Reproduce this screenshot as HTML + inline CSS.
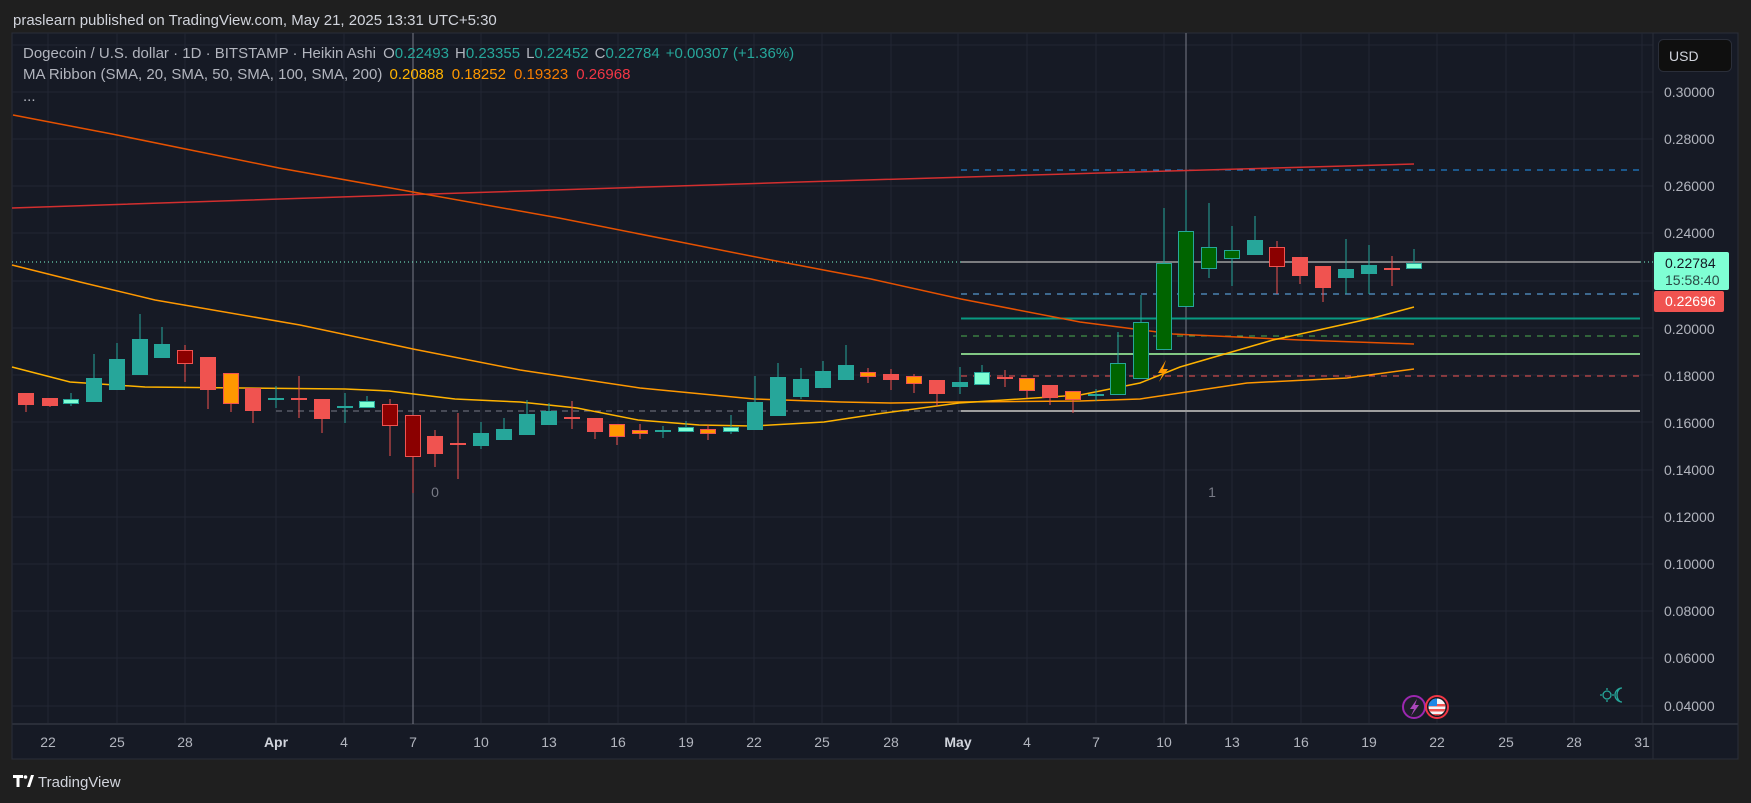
<!DOCTYPE html>
<html><head><meta charset="utf-8"><style>
html,body{margin:0;padding:0;background:#1f1f1f;width:1751px;height:803px;overflow:hidden;font-family:"Liberation Sans",sans-serif}
svg{position:absolute;left:0;top:0}
text{font-family:"Liberation Sans",sans-serif}
</style></head><body>
<svg width="1751" height="803" viewBox="0 0 1751 803" xmlns="http://www.w3.org/2000/svg">
<rect x="0" y="0" width="1751" height="803" fill="#1f1f1f"/>
<text x="13" y="25" font-size="15" fill="#d1d4dc">praslearn published on TradingView.com, May 21, 2025 13:31 UTC+5:30</text>
<rect x="12" y="33" width="1726" height="726" fill="#161a25" stroke="#2a2e39" stroke-width="1"/>
<g stroke="#222633" stroke-width="1">
<line x1="12" y1="45" x2="1653" y2="45"/><line x1="12" y1="92" x2="1653" y2="92"/><line x1="12" y1="139" x2="1653" y2="139"/><line x1="12" y1="186" x2="1653" y2="186"/><line x1="12" y1="233" x2="1653" y2="233"/><line x1="12" y1="281" x2="1653" y2="281"/><line x1="12" y1="328" x2="1653" y2="328"/><line x1="12" y1="375" x2="1653" y2="375"/><line x1="12" y1="422" x2="1653" y2="422"/><line x1="12" y1="470" x2="1653" y2="470"/><line x1="12" y1="517" x2="1653" y2="517"/><line x1="12" y1="564" x2="1653" y2="564"/><line x1="12" y1="611" x2="1653" y2="611"/><line x1="12" y1="658" x2="1653" y2="658"/><line x1="12" y1="706" x2="1653" y2="706"/>
<line x1="48" y1="33" x2="48" y2="724"/><line x1="117" y1="33" x2="117" y2="724"/><line x1="185" y1="33" x2="185" y2="724"/><line x1="276" y1="33" x2="276" y2="724"/><line x1="344" y1="33" x2="344" y2="724"/><line x1="481" y1="33" x2="481" y2="724"/><line x1="549" y1="33" x2="549" y2="724"/><line x1="618" y1="33" x2="618" y2="724"/><line x1="686" y1="33" x2="686" y2="724"/><line x1="754" y1="33" x2="754" y2="724"/><line x1="822" y1="33" x2="822" y2="724"/><line x1="891" y1="33" x2="891" y2="724"/><line x1="958" y1="33" x2="958" y2="724"/><line x1="1027" y1="33" x2="1027" y2="724"/><line x1="1096" y1="33" x2="1096" y2="724"/><line x1="1164" y1="33" x2="1164" y2="724"/><line x1="1232" y1="33" x2="1232" y2="724"/><line x1="1301" y1="33" x2="1301" y2="724"/><line x1="1369" y1="33" x2="1369" y2="724"/><line x1="1437" y1="33" x2="1437" y2="724"/><line x1="1506" y1="33" x2="1506" y2="724"/><line x1="1574" y1="33" x2="1574" y2="724"/><line x1="1642" y1="33" x2="1642" y2="724"/>
</g>
<line x1="12" y1="724" x2="1738" y2="724" stroke="#2a2e39" stroke-width="2"/>
<line x1="1653" y1="33" x2="1653" y2="759" stroke="#2a2e39" stroke-width="1"/>
<line x1="413" y1="33" x2="413" y2="724" stroke="#787b86" stroke-width="1"/>
<line x1="1186" y1="33" x2="1186" y2="724" stroke="#787b86" stroke-width="1"/>
<text x="435" y="497" font-size="14" fill="#787b86" text-anchor="middle">0</text>
<text x="1212" y="497" font-size="14" fill="#787b86" text-anchor="middle">1</text>
<line x1="961" y1="170" x2="1640" y2="170" stroke="#2196f3" stroke-dasharray="6,6"/>
<line x1="12" y1="262" x2="1653" y2="262" stroke="#7fffd4" stroke-dasharray="1,3"/>
<line x1="961" y1="262" x2="1640" y2="262" stroke="#9e9e9e" stroke-width="1.5"/>
<line x1="961" y1="294" x2="1640" y2="294" stroke="#64b5f6" stroke-dasharray="6,6"/>
<line x1="961" y1="318.5" x2="1640" y2="318.5" stroke="#089981" stroke-width="2"/>
<line x1="961" y1="336" x2="1640" y2="336" stroke="#4caf50" stroke-dasharray="6,6"/>
<line x1="961" y1="354" x2="1640" y2="354" stroke="#81c784" stroke-width="2"/>
<line x1="961" y1="376" x2="1640" y2="376" stroke="#f05350" stroke-dasharray="6,6"/>
<line x1="961" y1="411" x2="1640" y2="411" stroke="#9e9e9e" stroke-width="2"/>
<line x1="276" y1="411" x2="961" y2="411" stroke="#787b86" stroke-dasharray="6,5"/>
<polyline fill="none" stroke="#d32f2f" stroke-width="1.5" points="12,208 400,195 800,182 1100,173 1414,164"/>
<polyline fill="none" stroke="#e65100" stroke-width="1.5" points="13,115 112,134 279,168 413,192 559,218 670,240 771,260 871,279 961,299 1080,322 1173,334 1300,340 1414,344"/>
<polyline fill="none" stroke="#ff9800" stroke-width="1.5" points="12,265 80,282 155,300 300,325 413,349 520,370 640,388 754,399 841,402 891,403 959,402 1080,401 1140,399 1247,383 1347,378 1414,369"/>
<polyline fill="none" stroke="#ffb300" stroke-width="1.5" points="12,367 70,382 145,387 345,389 389,391 455,399 520,402 577,408 638,420 699,425 752,426 824,422 877,414 959,403 1080,395 1140,383 1180,367 1273,340 1373,318 1414,307"/>
<g stroke-width="1">
<line x1="26" y1="393" x2="26" y2="412" stroke="#f05350"/><rect x="18" y="393" width="16" height="12" fill="#f05350"/>
<line x1="50" y1="398" x2="50" y2="407" stroke="#f05350"/><rect x="42" y="398" width="16" height="8" fill="#f05350"/>
<line x1="71" y1="393" x2="71" y2="406" stroke="#26a69a"/><rect x="63.5" y="399.5" width="15" height="4" fill="#7fffd4" stroke="#26a69a"/>
<line x1="94" y1="354" x2="94" y2="402" stroke="#26a69a"/><rect x="86" y="378" width="16" height="24" fill="#26a69a"/>
<line x1="117" y1="343" x2="117" y2="390" stroke="#26a69a"/><rect x="109" y="359" width="16" height="31" fill="#26a69a"/>
<line x1="140" y1="314" x2="140" y2="375" stroke="#26a69a"/><rect x="132" y="339" width="16" height="36" fill="#26a69a"/>
<line x1="162" y1="327" x2="162" y2="358" stroke="#26a69a"/><rect x="154" y="344" width="16" height="14" fill="#26a69a"/>
<line x1="185" y1="345" x2="185" y2="382" stroke="#f05350"/><rect x="177.5" y="350.5" width="15" height="13" fill="#8b0000" stroke="#f05350"/>
<line x1="208" y1="357" x2="208" y2="409" stroke="#f05350"/><rect x="200" y="357" width="16" height="33" fill="#f05350"/>
<line x1="231" y1="373" x2="231" y2="412" stroke="#f05350"/><rect x="223.5" y="373.5" width="15" height="30" fill="#ff9800" stroke="#f05350"/>
<line x1="253" y1="388" x2="253" y2="423" stroke="#f05350"/><rect x="245" y="388" width="16" height="23" fill="#f05350"/>
<line x1="276" y1="386" x2="276" y2="408" stroke="#26a69a"/><rect x="268" y="398" width="16" height="2" fill="#26a69a"/>
<line x1="299" y1="376" x2="299" y2="418" stroke="#f05350"/><rect x="291" y="398" width="16" height="2" fill="#f05350"/>
<line x1="322" y1="399" x2="322" y2="433" stroke="#f05350"/><rect x="314" y="399" width="16" height="20" fill="#f05350"/>
<line x1="345" y1="393" x2="345" y2="423" stroke="#26a69a"/><rect x="337" y="406" width="16" height="2" fill="#26a69a"/>
<line x1="367" y1="396" x2="367" y2="408" stroke="#26a69a"/><rect x="359.5" y="401.5" width="15" height="6" fill="#7fffd4" stroke="#26a69a"/>
<line x1="390" y1="399" x2="390" y2="456" stroke="#f05350"/><rect x="382.5" y="404.5" width="15" height="21" fill="#8b0000" stroke="#f05350"/>
<line x1="413" y1="415" x2="413" y2="493" stroke="#f05350"/><rect x="405.5" y="415.5" width="15" height="41" fill="#8b0000" stroke="#f05350"/>
<line x1="435" y1="430" x2="435" y2="467" stroke="#f05350"/><rect x="427" y="436" width="16" height="18" fill="#f05350"/>
<line x1="458" y1="413" x2="458" y2="479" stroke="#f05350"/><rect x="450" y="443" width="16" height="2" fill="#f05350"/>
<line x1="481" y1="422" x2="481" y2="449" stroke="#26a69a"/><rect x="473" y="433" width="16" height="13" fill="#26a69a"/>
<line x1="504" y1="418" x2="504" y2="440" stroke="#26a69a"/><rect x="496" y="429" width="16" height="11" fill="#26a69a"/>
<line x1="527" y1="400" x2="527" y2="435" stroke="#26a69a"/><rect x="519" y="414" width="16" height="21" fill="#26a69a"/>
<line x1="549" y1="403" x2="549" y2="425" stroke="#26a69a"/><rect x="541" y="411" width="16" height="14" fill="#26a69a"/>
<line x1="572" y1="401" x2="572" y2="429" stroke="#f05350"/><rect x="564" y="417" width="16" height="2" fill="#f05350"/>
<line x1="595" y1="418" x2="595" y2="439" stroke="#f05350"/><rect x="587" y="418" width="16" height="14" fill="#f05350"/>
<line x1="617" y1="424" x2="617" y2="445" stroke="#f05350"/><rect x="609.5" y="424.5" width="15" height="12" fill="#ff9800" stroke="#f05350"/>
<line x1="640" y1="424" x2="640" y2="439" stroke="#f05350"/><rect x="632.5" y="430.5" width="15" height="3" fill="#ff9800" stroke="#f05350"/>
<line x1="663" y1="426" x2="663" y2="438" stroke="#26a69a"/><rect x="655" y="430" width="16" height="2" fill="#26a69a"/>
<line x1="686" y1="421" x2="686" y2="431" stroke="#26a69a"/><rect x="678.5" y="427.5" width="15" height="4" fill="#7fffd4" stroke="#26a69a"/>
<line x1="708" y1="425" x2="708" y2="440" stroke="#f05350"/><rect x="700.5" y="429.5" width="15" height="4" fill="#ff9800" stroke="#f05350"/>
<line x1="731" y1="415" x2="731" y2="434" stroke="#26a69a"/><rect x="723.5" y="427.5" width="15" height="4" fill="#7fffd4" stroke="#26a69a"/>
<line x1="755" y1="376" x2="755" y2="430" stroke="#26a69a"/><rect x="747" y="402" width="16" height="28" fill="#26a69a"/>
<line x1="778" y1="363" x2="778" y2="416" stroke="#26a69a"/><rect x="770" y="377" width="16" height="39" fill="#26a69a"/>
<line x1="801" y1="368" x2="801" y2="399" stroke="#26a69a"/><rect x="793" y="379" width="16" height="18" fill="#26a69a"/>
<line x1="823" y1="361" x2="823" y2="388" stroke="#26a69a"/><rect x="815" y="371" width="16" height="17" fill="#26a69a"/>
<line x1="846" y1="345" x2="846" y2="380" stroke="#26a69a"/><rect x="838" y="365" width="16" height="15" fill="#26a69a"/>
<line x1="868" y1="368" x2="868" y2="383" stroke="#f05350"/><rect x="860.5" y="372.5" width="15" height="4" fill="#ff9800" stroke="#f05350"/>
<line x1="891" y1="369" x2="891" y2="390" stroke="#f05350"/><rect x="883" y="374" width="16" height="6" fill="#f05350"/>
<line x1="914" y1="374" x2="914" y2="393" stroke="#f05350"/><rect x="906.5" y="376.5" width="15" height="7" fill="#ff9800" stroke="#f05350"/>
<line x1="937" y1="380" x2="937" y2="406" stroke="#f05350"/><rect x="929" y="380" width="16" height="14" fill="#f05350"/>
<line x1="960" y1="367" x2="960" y2="394" stroke="#26a69a"/><rect x="952" y="382" width="16" height="5" fill="#26a69a"/>
<line x1="982" y1="365" x2="982" y2="385" stroke="#26a69a"/><rect x="974.5" y="372.5" width="15" height="12" fill="#7fffd4" stroke="#26a69a"/>
<line x1="1005" y1="370" x2="1005" y2="387" stroke="#f05350"/><rect x="997" y="377" width="16" height="2" fill="#f05350"/>
<line x1="1027" y1="378" x2="1027" y2="398" stroke="#f05350"/><rect x="1019.5" y="378.5" width="15" height="12" fill="#ff9800" stroke="#f05350"/>
<line x1="1050" y1="385" x2="1050" y2="405" stroke="#f05350"/><rect x="1042" y="385" width="16" height="13" fill="#f05350"/>
<line x1="1073" y1="391" x2="1073" y2="413" stroke="#f05350"/><rect x="1065.5" y="391.5" width="15" height="8" fill="#ff9800" stroke="#f05350"/>
<line x1="1096" y1="389" x2="1096" y2="401" stroke="#26a69a"/><rect x="1088" y="394" width="16" height="2" fill="#26a69a"/>
<line x1="1118" y1="332" x2="1118" y2="395" stroke="#26a69a"/><rect x="1110.5" y="363.5" width="15" height="31" fill="#006400" stroke="#26a69a"/>
<line x1="1141" y1="295" x2="1141" y2="379" stroke="#26a69a"/><rect x="1133.5" y="322.5" width="15" height="56" fill="#006400" stroke="#26a69a"/>
<line x1="1164" y1="208" x2="1164" y2="350" stroke="#26a69a"/><rect x="1156.5" y="263.5" width="15" height="86" fill="#006400" stroke="#26a69a"/>
<line x1="1186" y1="190" x2="1186" y2="307" stroke="#26a69a"/><rect x="1178.5" y="231.5" width="15" height="75" fill="#006400" stroke="#26a69a"/>
<line x1="1209" y1="203" x2="1209" y2="278" stroke="#26a69a"/><rect x="1201.5" y="247.5" width="15" height="21" fill="#006400" stroke="#26a69a"/>
<line x1="1232" y1="226" x2="1232" y2="286" stroke="#26a69a"/><rect x="1224.5" y="250.5" width="15" height="8" fill="#006400" stroke="#26a69a"/>
<line x1="1255" y1="216" x2="1255" y2="255" stroke="#26a69a"/><rect x="1247" y="240" width="16" height="15" fill="#26a69a"/>
<line x1="1277" y1="241" x2="1277" y2="294" stroke="#f05350"/><rect x="1269.5" y="247.5" width="15" height="19" fill="#8b0000" stroke="#f05350"/>
<line x1="1300" y1="257" x2="1300" y2="284" stroke="#f05350"/><rect x="1292" y="257" width="16" height="19" fill="#f05350"/>
<line x1="1323" y1="266" x2="1323" y2="302" stroke="#f05350"/><rect x="1315" y="266" width="16" height="22" fill="#f05350"/>
<line x1="1346" y1="239" x2="1346" y2="294" stroke="#26a69a"/><rect x="1338" y="269" width="16" height="9" fill="#26a69a"/>
<line x1="1369" y1="245" x2="1369" y2="294" stroke="#26a69a"/><rect x="1361" y="265" width="16" height="9" fill="#26a69a"/>
<line x1="1392" y1="256" x2="1392" y2="286" stroke="#f05350"/><rect x="1384" y="268" width="16" height="2" fill="#f05350"/>
<line x1="1414" y1="249" x2="1414" y2="269" stroke="#26a69a"/><rect x="1406.5" y="263.5" width="15" height="5" fill="#7fffd4" stroke="#26a69a"/>
</g>
<path d="M1166,360 L1158,373 L1163,373 L1159,382 L1168,369 L1163,369 Z" fill="#ff9800"/>
<text x="23" y="58" font-size="15" fill="#b2b5be">Dogecoin / U.S. dollar · 1D · BITSTAMP · Heikin Ashi <tspan dx="3">O</tspan><tspan fill="#26a69a">0.22493</tspan><tspan dx="6">H</tspan><tspan fill="#26a69a">0.23355</tspan><tspan dx="6">L</tspan><tspan fill="#26a69a">0.22452</tspan><tspan dx="6">C</tspan><tspan fill="#26a69a">0.22784</tspan><tspan dx="6" fill="#26a69a">+0.00307 (+1.36%)</tspan></text>
<text x="23" y="79" font-size="15" fill="#b2b5be">MA Ribbon (SMA, 20, SMA, 50, SMA, 100, SMA, 200) <tspan dx="3" fill="#ffb300">0.20888</tspan><tspan dx="8" fill="#ff9800">0.18252</tspan><tspan dx="8" fill="#f57c00">0.19323</tspan><tspan dx="8" fill="#f23645">0.26968</tspan></text>
<text x="23" y="101" font-size="15" fill="#b2b5be">...</text>
<rect x="1658.5" y="39.5" width="73" height="32" rx="5" fill="#0f0f0f" stroke="#2a2e39"/>
<text x="1669" y="61" font-size="14" fill="#d1d4dc">USD</text>
<g font-size="14" fill="#b2b5be">
<text x="1664" y="97">0.30000</text><text x="1664" y="144">0.28000</text><text x="1664" y="191">0.26000</text><text x="1664" y="238">0.24000</text><text x="1664" y="334">0.20000</text><text x="1664" y="381">0.18000</text><text x="1664" y="428">0.16000</text><text x="1664" y="475">0.14000</text><text x="1664" y="522">0.12000</text><text x="1664" y="569">0.10000</text><text x="1664" y="616">0.08000</text><text x="1664" y="663">0.06000</text><text x="1664" y="711">0.04000</text>
</g>
<rect x="1654" y="252" width="75" height="38" rx="2" fill="#7fffd4"/>
<text x="1665" y="268" font-size="14" fill="#131722">0.22784</text>
<text x="1665" y="285" font-size="14" fill="#2a4a45">15:58:40</text>
<rect x="1654" y="291" width="70" height="21" rx="2" fill="#f05350"/>
<text x="1665" y="306" font-size="14" fill="#ffffff">0.22696</text>
<g font-size="14" fill="#b2b5be" text-anchor="middle">
<text x="48" y="747">22</text><text x="117" y="747">25</text><text x="185" y="747">28</text><text x="276" y="747" font-weight="bold" fill="#d1d4dc">Apr</text><text x="344" y="747">4</text><text x="413" y="747">7</text><text x="481" y="747">10</text><text x="549" y="747">13</text><text x="618" y="747">16</text><text x="686" y="747">19</text><text x="754" y="747">22</text><text x="822" y="747">25</text><text x="891" y="747">28</text><text x="958" y="747" font-weight="bold" fill="#d1d4dc">May</text><text x="1027" y="747">4</text><text x="1096" y="747">7</text><text x="1164" y="747">10</text><text x="1232" y="747">13</text><text x="1301" y="747">16</text><text x="1369" y="747">19</text><text x="1437" y="747">22</text><text x="1506" y="747">25</text><text x="1574" y="747">28</text><text x="1642" y="747">31</text>
</g>
<circle cx="1414" cy="707" r="11" fill="#1e1e2a" stroke="#9c27b0" stroke-width="2"/>
<path d="M1417,699 L1410,709 L1414,709 L1411,716 L1419,705 L1415,705 Z" fill="#ab47bc"/>
<circle cx="1437" cy="707" r="11" fill="#131722" stroke="#f23645" stroke-width="2"/>
<clipPath id="fc"><circle cx="1437" cy="707" r="8.5"/></clipPath>
<g clip-path="url(#fc)">
<rect x="1428" y="698" width="18" height="18" fill="#f5f5f5"/>
<rect x="1428" y="704" width="18" height="2.5" fill="#ef5350"/><rect x="1428" y="709" width="18" height="2.5" fill="#ef5350"/><rect x="1428" y="714" width="18" height="3" fill="#ef5350"/>
<rect x="1428" y="698" width="9" height="8" fill="#1e88e5"/>
</g>
<circle cx="1607" cy="695" r="4" fill="none" stroke="#26a69a" stroke-width="1.3"/>
<path d="M1607,688v2M1607,700v2M1600,695h2M1612,695h2" stroke="#26a69a" stroke-width="1.3"/>
<path d="M1622,688 a7,7 0 1 0 0,14 a5,7 0 1 1 0,-14z" fill="none" stroke="#26a69a" stroke-width="1.3"/>
<path d="M13,775 h10 v3 h-3.5 v9 h-3 v-9 h-3.5z" fill="#ffffff"/>
<circle cx="25.5" cy="777" r="1.8" fill="#ffffff"/>
<path d="M27,787 L31,775 h3 L30,787z" fill="#ffffff"/>
<text x="38" y="787" font-size="15" fill="#d1d4dc">TradingView</text>
</svg>
</body></html>
